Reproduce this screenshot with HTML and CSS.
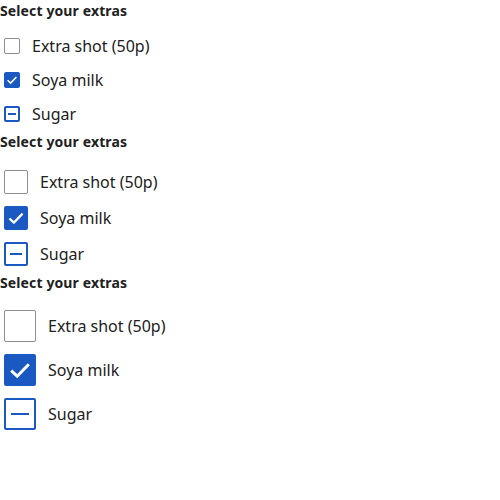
FILE: index.html
```html
<!DOCTYPE html>
<html lang="en">
<head>
<meta charset="utf-8">
<title>Checkbox sizes</title>
<link rel="stylesheet" href="styles.css">
</head>
<body>
  <div class="group group--sm" role="group" aria-labelledby="g1">
    <div class="group__title" id="g1">Select your extras</div>
    <div class="group__list">
      <label class="option"><span class="box box--off"></span><span class="option__text">Extra shot (50p)</span></label>
      <label class="option"><span class="box box--on"><svg class="box__check" viewBox="0 0 16 16"><path d="M3.6 8.3 L6.6 11.1 L12.4 5.1"/></svg></span><span class="option__text">Soya milk</span></label>
      <label class="option"><span class="box box--mixed"><span class="box__dash"></span></span><span class="option__text">Sugar</span></label>
    </div>
  </div>
  <div class="group group--md" role="group" aria-labelledby="g2">
    <div class="group__title" id="g2">Select your extras</div>
    <div class="group__list">
      <label class="option"><span class="box box--off"></span><span class="option__text">Extra shot (50p)</span></label>
      <label class="option"><span class="box box--on"><svg class="box__check" viewBox="0 0 16 16"><path d="M3.6 8.3 L6.6 11.1 L12.4 5.1"/></svg></span><span class="option__text">Soya milk</span></label>
      <label class="option"><span class="box box--mixed"><span class="box__dash"></span></span><span class="option__text">Sugar</span></label>
    </div>
  </div>
  <div class="group group--lg" role="group" aria-labelledby="g3">
    <div class="group__title" id="g3">Select your extras</div>
    <div class="group__list">
      <label class="option"><span class="box box--off"></span><span class="option__text">Extra shot (50p)</span></label>
      <label class="option"><span class="box box--on"><svg class="box__check" viewBox="0 0 16 16"><path d="M3.6 8.3 L6.6 11.1 L12.4 5.1"/></svg></span><span class="option__text">Soya milk</span></label>
      <label class="option"><span class="box box--mixed"><span class="box__dash"></span></span><span class="option__text">Sugar</span></label>
    </div>
  </div>
</body>
</html>
```

FILE: styles.css
```css
* { box-sizing: border-box; }

html, body {
  margin: 0;
  padding: 0;
  background: #ffffff;
}

body {
  font-family: "Noto Sans", "Open Sans", sans-serif;
  color: #212121;
}

.group {
  --box: 16px;
  --row: 34px;
  --list-top: 7px;
}

.group--md {
  --box: 24px;
  --row: 36px;
  --list-top: 11px;
}

.group--lg {
  --box: 32px;
  --row: 44px;
  --list-top: 10px;
}

.group__title {
  font-size: 14px;
  line-height: 22px;
  font-weight: 700;
  letter-spacing: 0.12px;
  color: #212121;
}

.group__list {
  margin-top: var(--list-top);
  display: flex;
  flex-direction: column;
}

.option {
  display: flex;
  align-items: center;
  height: var(--row);
  padding-left: 4px;
  gap: 12px;
  cursor: pointer;
}

.option__text {
  font-size: 16px;
  line-height: 24px;
  color: #212121;
}

.box {
  flex: none;
  width: var(--box);
  height: var(--box);
  border-radius: 2px;
  display: flex;
  align-items: center;
  justify-content: center;
}

.box--off {
  border: 1px solid #8c8c8c;
  background: #ffffff;
}

.box--on {
  background: #1a58c2;
}

.box--mixed {
  border: 2px solid #1a58c2;
  background: #ffffff;
}

.box__check {
  width: 100%;
  height: 100%;
  display: block;
}

.box__check path {
  fill: none;
  stroke: #ffffff;
  stroke-width: 1.5;
  stroke-linecap: butt;
  stroke-linejoin: miter;
}

.box__dash {
  display: block;
  width: 64%;
  height: 2px;
  background: #1a58c2;
}
```
